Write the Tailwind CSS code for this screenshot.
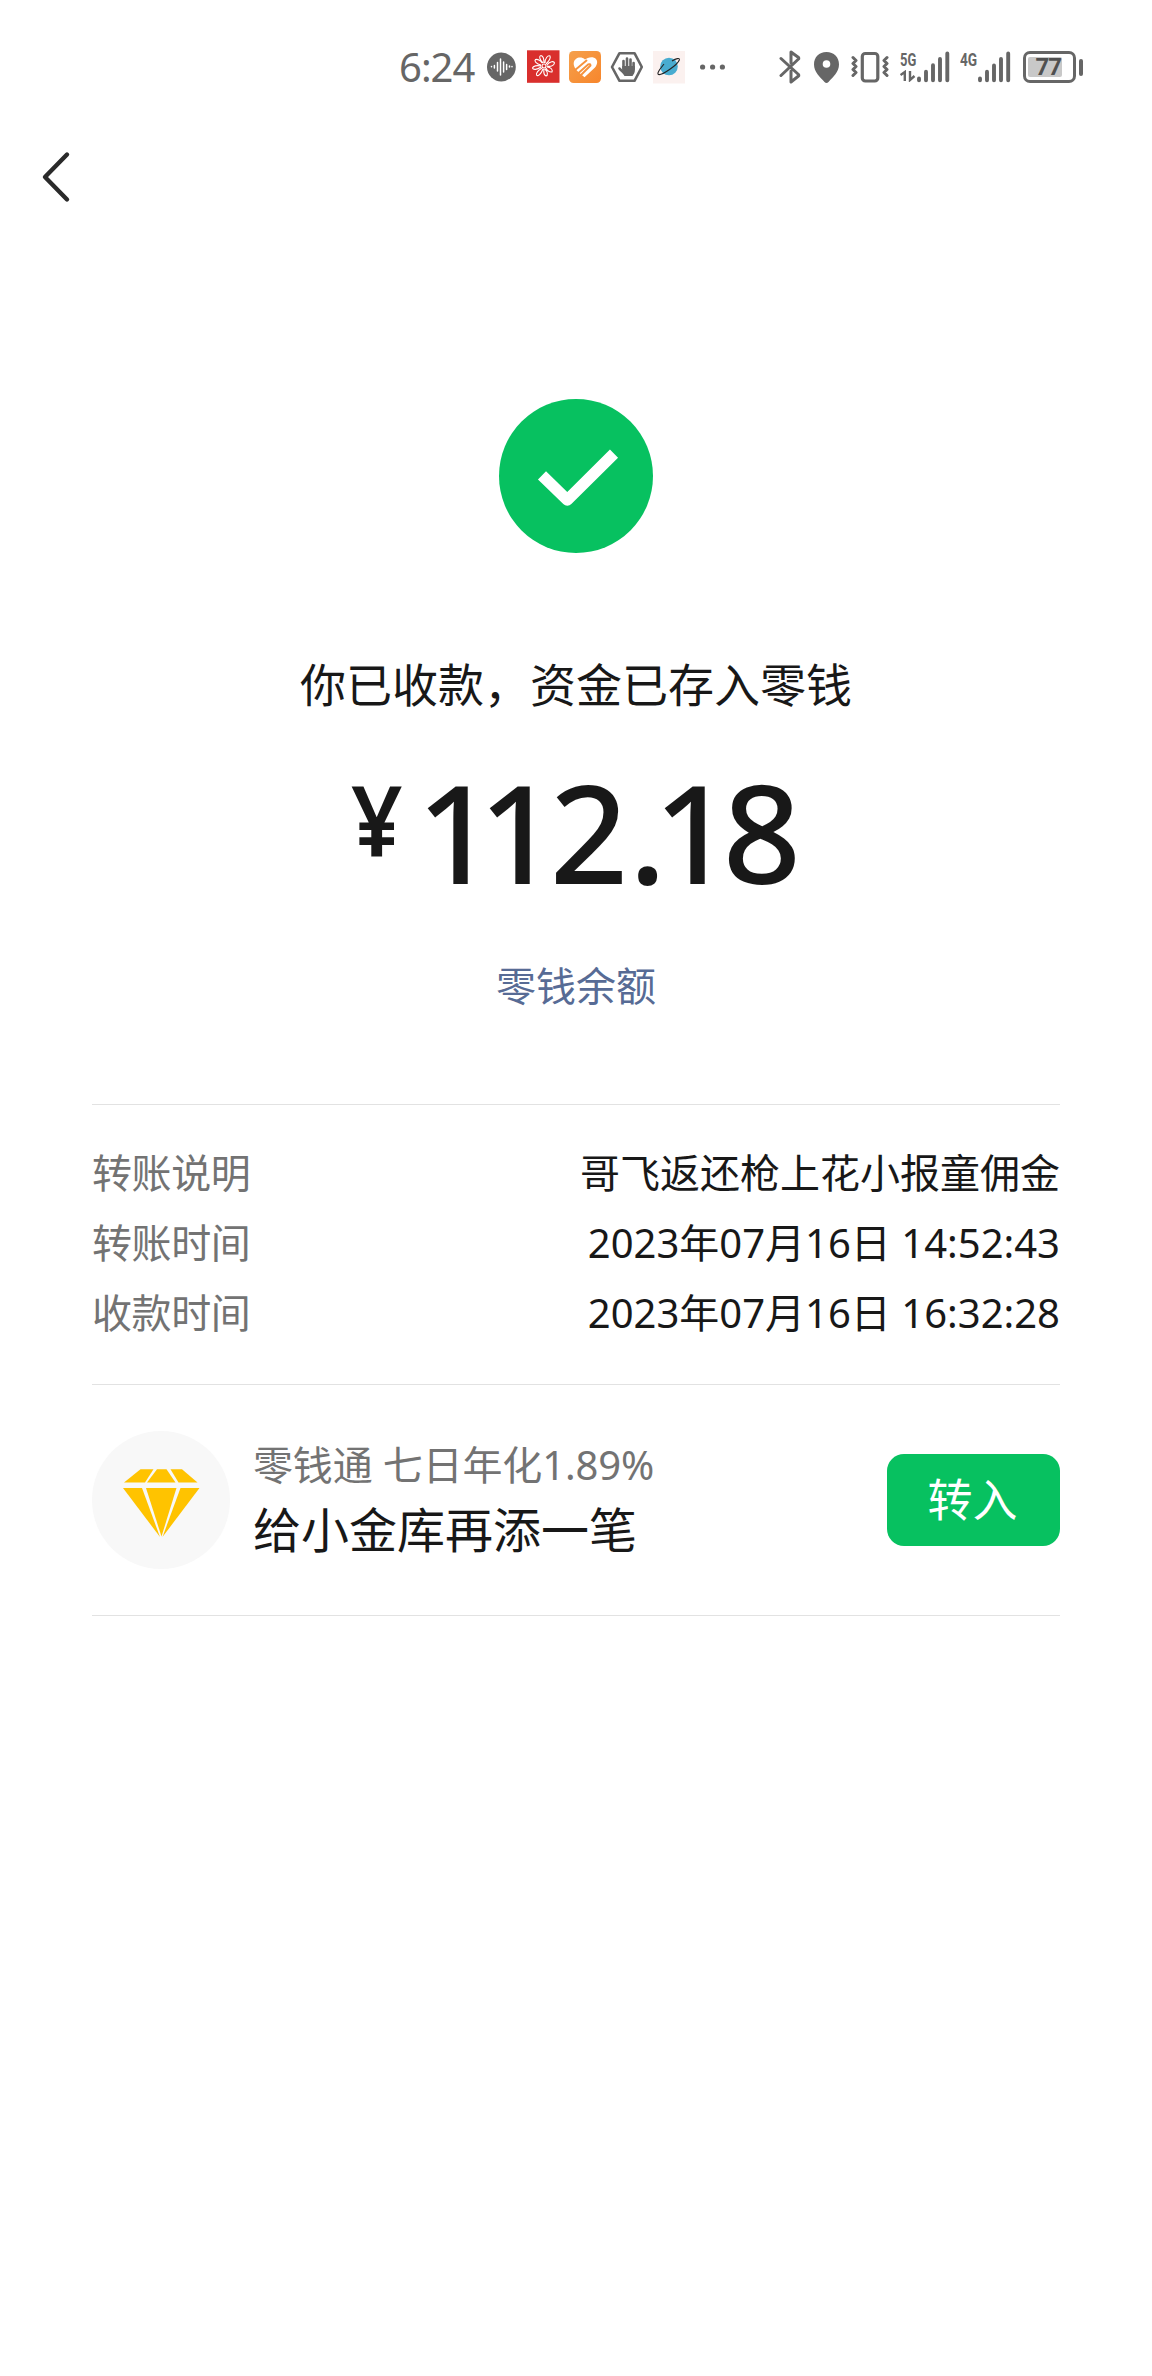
<!DOCTYPE html>
<html lang="zh-CN">
<head>
<meta charset="utf-8">
<title>收款详情</title>
<script src="https://cdn.jsdelivr.net/npm/@tailwindcss/browser@4"></script>
</head>
<body class="bg-white">
<div class="flex h-[2376px] w-[1152px] flex-col overflow-hidden bg-white font-['Noto_Sans','Noto_Sans_CJK_SC',sans-serif] text-[#181818]">

  <!-- status bar -->
  <header class="flex h-[134px] items-center pl-[399px] text-[#666]">
    <span class="w-[88px] text-[40px] leading-[40px] tracking-[-1px]">6:24</span>
    <svg class="h-[34px] w-[29px]" viewBox="487 50 29 34"><circle cx="501.4" cy="67" r="14.4" fill="#666"/><g stroke="#fff" stroke-width="1.5" stroke-linecap="round"><path d="M491.500 66.500v.2M494.400 65.500v2.400M497.500 62.500v8.500M500.500 59v16M503.600 62v10M506.600 64.500v5M509.500 66v1M512 66.500v.2"/></g></svg>
    <svg class="ml-[11px] h-[34px] w-[33px]" viewBox="527 50 33 34"><rect x="527" y="50.300" width="32.500" height="32.500" fill="#d92f2d"/><g fill="none" stroke="#fff" stroke-width="1.100"><path d="M543 63C539 59 539 56 541 55.500C543.500 56 544 60 544 63M545 63C545 58 548 55 550 56C551 58 548 62 546 64M547 65C550 61 554 61 554.500 63C554 66 550 67 547 66M547 67C551 67 553 70 552 72C549 72.500 547 70 546 68M545 69C548 72 548 75.500 546 76C544 75 543.500 72 544 69M543 69C541 74 538 77 536.500 75C536 73 539 70 542 68M541 67C537 70 533 70 532.500 68C533 66 537 65 541 66M541 65C536 64 534 61 535.500 59.500C538 59 541 61 542 63"/><circle cx="544" cy="66" r="2"/></g></svg>
    <svg class="ml-[9px] h-[34px] w-[33px]" viewBox="569 50 33 34"><defs><linearGradient id="og" x1="0" y1="0" x2="1" y2="1"><stop offset="0" stop-color="#f5a04c"/><stop offset="1" stop-color="#f7862c"/></linearGradient></defs><rect x="569" y="51" width="32" height="32" rx="4.500" fill="url(#og)"/><path d="M585 59.500C581 56 574.500 57.500 573.700 63C573.500 67 576 70 579 72.500L584.500 77.300L595 67.500C598.500 63 597.500 59 594 57.700C590 56.500 587 58.500 585 59.500Z" fill="#fff"/><g fill="none" stroke="#f6923c" stroke-width="1.900" stroke-linecap="round"><path d="M574.500 70.500L586.500 60.500"/><path d="M578.500 73L588 64.500Q590.500 63.500 590.500 65.500L581.500 74.500"/></g></svg>
    <svg class="ml-[8px] h-[34px] w-[34px]" viewBox="610 50 34 34"><path d="M619.500 53.200H634.500L641.800 67L634.500 80.800H619.500L612 67Z" fill="none" stroke="#666" stroke-width="2.600" stroke-linejoin="round"/><path d="M623.500 68V61M627 67V58.500M630.500 67V59.500M633.600 69V63" stroke="#666" stroke-width="2.600" stroke-linecap="round"/><path d="M622.200 66H634.900V70C634.900 73 633.500 74 632.500 76H624.500C623 73 620 71.500 618.300 69C617.800 67.500 619.500 66.800 620.500 67.700L622.200 69.500Z" fill="#666"/></svg>
    <svg class="ml-[9px] h-[34px] w-[33px]" viewBox="653 50 33 34"><rect x="653" y="51" width="32" height="32.500" fill="#fbf1ef"/><circle cx="669" cy="66.500" r="8.800" fill="#48acd0"/><path d="M664 64C660 69 656.500 73.500 658.500 74.500C662 75.500 677.500 65 679.300 60C680 57.500 676 58.500 672 61" fill="none" stroke="#222" stroke-width="1.100"/></svg>
    <svg class="ml-[13px] h-[34px] w-[28px]" viewBox="699 50 28 34" fill="#666"><circle cx="702.600" cy="67" r="2.600"/><circle cx="712.600" cy="67" r="2.600"/><circle cx="722.400" cy="67" r="2.600"/></svg>
    <svg class="ml-[52px] h-[36px] w-[24px]" viewBox="779 49 24 36" fill="none" stroke="#666" stroke-width="3" stroke-linecap="round" stroke-linejoin="round"><path d="M781 58.500L798.500 74.500Q799 75.500 798.500 76L791 82V71M791 63V52L798.500 57.500Q799 58.500 798.500 59L781 75.500"/></svg>
    <svg class="ml-[11px] h-[34px] w-[26px]" viewBox="814 50 26 34"><path fill="#666" fill-rule="evenodd" d="M826.500 52C819 52 814 57 814 64.500C814 72 820 77 824.500 82Q826.500 84 828.500 82C833 77 839 72 839 64.500C839 57 834 52 826.500 52ZM826.500 60.200A3.800 3.800 0 1 0 826.500 67.800A3.800 3.800 0 1 0 826.500 60.200Z"/></svg>
    <svg class="ml-[11px] h-[34px] w-[39px]" viewBox="851 50 39 34" fill="none" stroke="#666" stroke-linecap="round" stroke-linejoin="round"><rect x="862.300" y="53.500" width="15.500" height="27.500" rx="3" stroke-width="3.200"/><path stroke-width="3" d="M853 57.500L856 60.500L853 63.500L856 66.500L853 69.500L856 72.500L853 75.500M887 57.500L884 60.500L887 63.500L884 66.500L887 69.500L884 72.500L887 75.500"/></svg>
    <div class="ml-[10px] flex h-[36px] w-[50px] items-start">
      <div class="flex w-[17px] flex-col items-start">
        <span class="origin-left scale-x-[0.72] pt-[2px] font-['Roboto','Liberation_Sans',sans-serif] text-[18px] leading-[17px] font-bold">5G</span>
        <svg class="mt-[2px] h-[12px] w-[16px]" viewBox="0 0 16 12" fill="none" stroke="#666" stroke-width="2.400"><path d="M.5 5L4.800 2V11M10 1V10L14.500 6"/></svg>
      </div>
      <svg class="h-[36px] w-[33px]" viewBox="917 49 33 36" stroke="#666" stroke-width="3.900" stroke-linecap="round"><path d="M919 78.500V80.300M926 71.800V80.300M933 65.200V80.300M940 59V80.300M947.300 53.500V80.300"/></svg>
    </div>
    <div class="ml-[10px] flex h-[36px] w-[51px] items-start">
      <span class="w-[17px] origin-left scale-x-[0.76] pt-[2px] font-['Roboto','Liberation_Sans',sans-serif] text-[18px] leading-[17px] font-bold">4G</span>
      <svg class="h-[36px] w-[34px]" viewBox="977 49 34 36" stroke="#666" stroke-width="3.900" stroke-linecap="round"><path d="M980 78.500V80.300M987 71.800V80.300M994 65.500V80.300M1001 59V80.300M1008.200 53.500V80.300"/></svg>
    </div>
    <div class="ml-[12px] flex items-center gap-[3px]">
      <div class="flex h-[32px] w-[53px] items-center rounded-[7px] border-[3px] border-[#666] pl-[2px]">
        <div class="flex h-[20px] w-[34px] items-center justify-end rounded-[2px] bg-[#c8c8c8] pr-[1px] font-['Roboto',sans-serif] text-[24px] leading-[20px] font-bold tracking-[-1px] text-[#505050]">77</div>
      </div>
      <div class="h-[17px] w-[4px] rounded-full bg-[#666]"></div>
    </div>
  </header>

  <nav class="flex h-[86px] items-center pl-[41px]">
    <svg class="h-[52px] w-[30px]" viewBox="41 151 30 52" fill="none" stroke="#2a2a2a" stroke-width="4.400" stroke-linecap="round"><path stroke-linejoin="round" d="M67 154.500L45 177L67 199.500"/></svg>
  </nav>

  <!-- result -->
  <section class="flex flex-col items-center pt-[179px]">
    <svg class="h-[154px] w-[154px]" viewBox="499 399 154 154"><circle cx="576" cy="476" r="77" fill="#07c160"/><path d="M542 475.300L567.300 500L614 453.700" fill="none" stroke="#fff" stroke-width="11.500" stroke-linejoin="round"/></svg>
    <h1 class="mt-[105px] text-[46px] leading-[52px] font-normal">你已收款，资金已存入零钱</h1>
    <div class="mt-[44px] flex h-[154px] w-[450px] items-start font-medium">
      <span class="w-[72px] origin-left scale-x-[0.92] pt-[15px] text-[98px] leading-[98px] font-semibold">¥</span>
      <span class="text-[137px] leading-[154px] whitespace-nowrap"><span class="tracking-[-16.4px]">1</span><span class="tracking-[-7.4px]">1</span><span class="tracking-[1px]">2</span><span class="tracking-[-12.7px]">.</span><span class="tracking-[-9.4px]">1</span><span>8</span></span>
    </div>
    <a class="mt-[54px] text-[40px] leading-[48px] text-[#576b95]">零钱余额</a>
  </section>

  <main class="mx-[92px] mt-[94px]">
    <dl class="border-y border-[#e2e2e2] pt-[33px] pb-[36px] text-[40px] leading-[70px]">
      <div class="flex justify-between"><dt class="tracking-[-0.4px] text-[#737373]">转账说明</dt><dd>哥飞返还枪上花小报童佣金</dd></div>
      <div class="flex justify-between"><dt class="tracking-[-0.4px] text-[#737373]">转账时间</dt><dd>2023年07月16日 14:52:43</dd></div>
      <div class="flex justify-between"><dt class="tracking-[-0.4px] text-[#737373]">收款时间</dt><dd>2023年07月16日 16:32:28</dd></div>
    </dl>
    <div class="flex h-[231px] items-center border-b border-[#e2e2e2]">
      <svg class="h-[138px] w-[138px]" viewBox="0 0 138 138"><circle cx="69" cy="69" r="69" fill="#f8f8f8"/><g fill="#ffc300"><path d="M48.500 38.200H61.500L53 51.500H32Z"/><path d="M65 38.200H74.500L83.500 51.500H55Z"/><path d="M78.500 38.200H90L105.500 51.500H86.500Z"/><path d="M31 57H50L68 106Z"/><path d="M54 57H84.500L69.500 105.500Z"/><path d="M88.500 57H107.500L70.500 106Z"/></g></svg>
      <div class="ml-[23px] flex-1">
        <p class="text-[40px] leading-[60px] tracking-[-0.15px] text-[#737373]">零钱通 七日年化1.89%</p>
        <p class="text-[48px] leading-[70px]">给小金库再添一笔</p>
      </div>
      <button class="h-[92px] w-[173px] rounded-[17px] bg-[#07c160] pr-[2px] text-[45px] leading-[92px] text-white">转入</button>
    </div>
  </main>
</div>
</body>
</html>
